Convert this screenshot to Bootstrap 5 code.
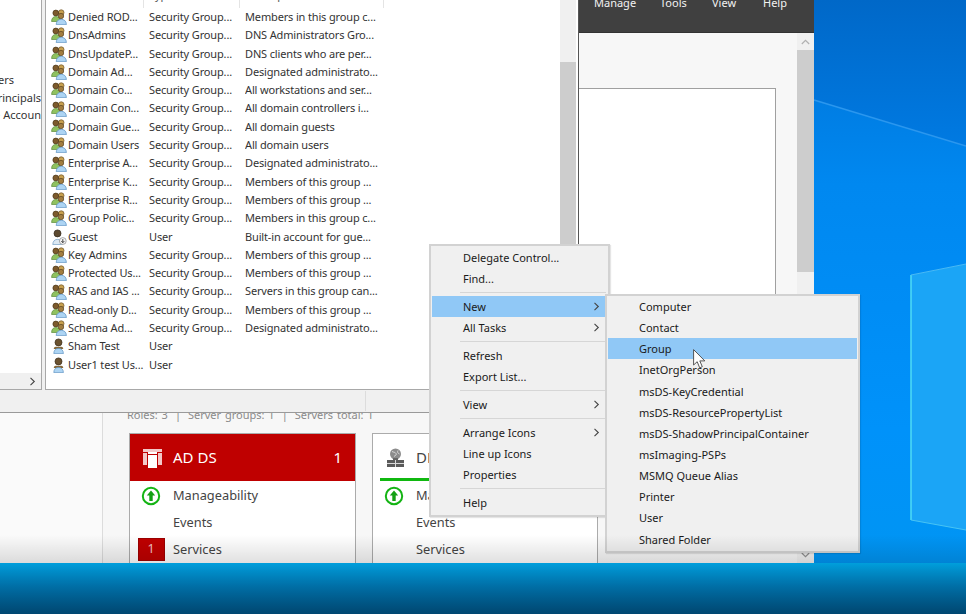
<!DOCTYPE html>
<html lang="en">
<head>
<meta charset="utf-8">
<title>Active Directory Users and Computers</title>
<link rel="stylesheet" href="https://cdn.jsdelivr.net/npm/bootstrap@5.3.0/dist/css/bootstrap.min.css">
<style>
html,body{margin:0;height:100%;overflow:hidden}
body{font-family:"Noto Sans","Open Sans",sans-serif;font-size:11px;color:#222}
.desk{width:966px;height:614px;background:linear-gradient(180deg,#0070d4 0,#0088f0 30%,#0092fa 70%,#0096f0 100%)}
.desk-art{left:0;top:0}
.sm-win{left:0;top:0;width:814px;height:563px;background:#f7f7f7}
.sm-top{height:33px;background:#404040;padding-left:594px;border-bottom:1px solid #333}
.sm-top span{color:#f2f2f2;font-size:11px;line-height:8px;position:relative;top:-1px}
.sm-top .m1{width:66px}.sm-top .m2{width:52px}.sm-top .m3{width:51px}
.sm-nav{width:103px;background:#fafafa;border-right:1px solid #dcdcdc}
.sm-main{min-width:0}
.sm-panel{margin:55px 21px 0 0;height:320px;background:#fff;border:1px solid #a0a0a0;flex:none}
.sm-roles{height:20px;margin-left:24px;color:#8a8a8a;font-size:11px;line-height:14px;word-spacing:1px;flex:none}
.sm-roles i{font-style:normal;margin:0 7px}
.sm-bar{width:17px;background:#f0f0f0}
.sm-bar-up,.sm-bar-dn{height:17px;color:#a8a8a8}
.sm-thumb{height:222px;background:#cdcdcd;flex:none}
.tile{height:140px;border:1px solid #ababab;background:#fff;border-radius:0;margin-top:5px;color:#444}
.tile-ad{width:227px;margin-left:26px}
.tile-dn{width:226px;margin-left:16px}
.tile-hd{height:47px;background:#bf0000;color:#fff;font-size:15px;padding:0 13px 0 13px;flex:none}
.tile-hd-plain{background:#fff;color:#444;position:relative}
.tile-hd-plain::after{content:"";position:absolute;left:7px;right:7px;bottom:0;height:3px;background:#10b810}
.tile-ic{width:30px;flex:none}
.tile-rows{padding-top:1px}
.tile-row{height:27px;font-size:12.8px;color:#444}
.tile-sign{width:43px;flex:none;display:flex;justify-content:center;padding-right:1px}
.tile-sign.flag span{width:27px;height:23px;background:#bf0000;border:1px solid #9c0000;color:#f3c0c0;font-size:12.5px;display:flex;align-items:center;justify-content:center;flex:none}
.ad-win{left:0;top:0;width:579px;height:413px;background:#f0f0f0;border-bottom:1px solid #9a9a9a;border-right:1px solid #555}
.ad-tree{width:42px;height:390px;background:#fff;border-right:1px solid #a8a8a8;border-bottom:1px solid #a8a8a8;flex:none;overflow:hidden}
.ad-tree-list{padding-top:71px;flex:1}
.ad-tree-list div{height:17.5px;line-height:17.5px;white-space:nowrap;display:flex;justify-content:flex-end;color:#333}
.ad-tree-list div span{flex:none}
.ad-tree-list .tr1{padding-right:27px}
.ad-tree-sb{height:16px;background:#f0f0f0;color:#555;padding-right:5px}
.ad-list{margin-left:3px;width:533px;height:390px;background:#fff;border-left:1px solid #a8a8a8;border-bottom:1px solid #a8a8a8;flex:none;overflow:hidden}
.ad-scroll{width:16px;background:#f0f0f0;position:relative}
.ad-main{flex:none;width:514px;overflow:hidden}
.ad-head{height:8px;overflow:hidden;color:#555;background:#fff}
.ad-head span{display:block;line-height:16px;margin-top:-13px;padding-left:5px;border-right:1px solid #e4e4e4;height:21px}
.ad-head .hc1{width:98px}.ad-head .hc2{width:96px}.ad-head .hc3{width:144px}
.ad-tbl{table-layout:fixed;width:514px;--bs-table-bg:transparent;--bs-table-color:#333;letter-spacing:-.15px}
.ad-tbl td{padding:0;height:18.3px;line-height:18.3px;white-space:nowrap;overflow:hidden;border:0;vertical-align:middle}
.ad-tbl .c0{width:22px;padding-left:5px}
.ad-tbl .c0 svg{display:block;width:16px;height:16px}
.ad-tbl .c1{width:81px}.ad-tbl .c2{width:96px}
.ad-scroll-thumb{height:183px;background:#cdcdcd;margin-top:62px}
.ad-status{height:22px}
.ad-status span{width:366px;border-right:1px solid #dcdcdc;height:20px;margin-top:1px}
.ctx{--bs-dropdown-bg:#f0f0f0;--bs-dropdown-border-color:#d2d2d2;--bs-dropdown-border-radius:0;--bs-dropdown-padding-y:0;--bs-dropdown-min-width:0;--bs-dropdown-font-size:11px;--bs-dropdown-link-color:#1a1a1a;--bs-dropdown-link-hover-bg:#90c8f6;--bs-dropdown-link-hover-color:#1a1a1a;--bs-dropdown-link-active-bg:#90c8f6;--bs-dropdown-link-active-color:#1a1a1a;--bs-dropdown-item-padding-x:0;--bs-dropdown-item-padding-y:0;display:block;box-shadow:1px 1px 1px rgba(0,0,0,.1);border-width:2px}
.ctx-main{left:429px;top:244px;width:181px;height:273px;padding:.5px 2px 0 1px}
.ctx-sub{left:605px;top:294px;width:255px;height:259px;padding:0 1px 0 1px}
.ctx .dropdown-item{height:21px;line-height:21px;padding-left:31px;display:flex;justify-content:space-between;align-items:center}
.ctx-main .dropdown-item{width:173px}
.ctx-sub .dropdown-item{height:21.15px}
.ctx .dropdown-item svg{width:7px;height:9px;margin-right:5px}
.ctx .dropdown-divider{margin:3px 0 3px 28px;border-top:1px solid #d6d6d6;opacity:1;height:0;box-sizing:content-box}
.ctx-main .dropdown-divider{width:146px}
.mouse{left:693px;top:349px;width:13px;height:20px;pointer-events:none;z-index:1002}
.fade-low{left:0;top:535px;width:966px;height:79px;pointer-events:none;z-index:1001;background:linear-gradient(180deg,rgba(0,0,0,0) 0,rgba(0,0,0,.12) 35%,rgba(0,0,0,.04) 36%,rgba(0,0,0,.36) 100%)}
.band{left:0;top:563px;width:966px;height:51px;background:linear-gradient(180deg,#00a4e4 0,#0088cc 45%,#006fb0 100%)}
</style>
</head>
<body>
<svg width="0" height="0" class="position-absolute" aria-hidden="true">
  <symbol id="ic-grp" viewBox="0 0 16 16">
    <circle cx="10.2" cy="3.600" r="2.800" fill="#c9a14f" stroke="#6d5228" stroke-width=".7"/>
    <circle cx="4.800" cy="4" r="2.900" fill="#7c5a2c" stroke="#4a3618" stroke-width=".7"/>
    <path d="M.6 12.500c0-3.600 2-5 4.300-5s4.300 1.400 4.300 5z" fill="#8fc15f" stroke="#5a8a3a" stroke-width=".7"/>
    <circle cx="10" cy="7" r="2.700" fill="#a27d3f" stroke="#5a4320" stroke-width=".7"/>
    <path d="M5.200 15.600c0-3.600 2.300-5.300 5-5.300s5.200 1.700 5.200 5.300z" fill="#add4f3" stroke="#5a90c2" stroke-width=".7"/>
  </symbol>
  <symbol id="ic-usr" viewBox="0 0 16 16">
    <circle cx="7.500" cy="4.400" r="3.500" fill="#6b5230" stroke="#3a2c18" stroke-width=".7"/>
    <path d="M3.300 9.200c.9-.5 7.500-.5 8.400 0l.6 1.800H2.700z" fill="#86683a"/>
    <path d="M2.800 15.600c0-3.300 1.800-5.200 4.700-5.200s4.900 1.900 4.900 5.200z" fill="#add4f3" stroke="#5a90c2" stroke-width=".7"/>
  </symbol>
  <symbol id="ic-gst" viewBox="0 0 16 16">
    <circle cx="6.500" cy="4.400" r="3.500" fill="#5d4a30" stroke="#30261a" stroke-width=".7"/>
    <path d="M1.800 15.600c0-3.300 1.800-5.200 4.700-5.200s4.900 1.900 4.900 5.200z" fill="#dce8f2" stroke="#6a98c2" stroke-width=".7"/>
    <circle cx="11.800" cy="12" r="3.400" fill="#f4f4f4" stroke="#8a8a8a" stroke-width=".7"/>
    <path d="M11.800 10.100v3.400M10.300 12.100l1.500 1.600 1.500-1.600" fill="none" stroke="#333" stroke-width=".9"/>
  </symbol>
  <symbol id="ic-chev" viewBox="0 0 7 9">
    <path d="M1.500 .8 5.300 4.500 1.500 8.200" fill="none" stroke="#444" stroke-width="1.100"/>
  </symbol>
  <symbol id="ic-up" viewBox="0 0 20 20">
    <circle cx="10" cy="10" r="8.200" fill="#fff" stroke="#14b414" stroke-width="2"/>
    <path d="M10 4.600 14.200 9.400H11.700V15H8.300V9.400H5.800z" fill="#14a014"/>
  </symbol>
</svg>

<div class="desk position-relative overflow-hidden">
  <svg class="desk-art position-absolute" width="966" height="614" viewBox="0 0 966 614" aria-hidden="true">
    <defs>
      <linearGradient id="gUp" x1="0" y1="0" x2="0" y2="1"><stop offset="0" stop-color="#0068c8"/><stop offset="1" stop-color="#007ae2"/></linearGradient>
    </defs>
    <polygon points="814,0 966,0 966,146 814,100" fill="url(#gUp)"/>
    <line x1="814" y1="100" x2="966" y2="146" stroke="#2b97ee" stroke-width="1.500"/>
    <polygon points="911,275 966,264 966,530 911,520" fill="#1ba5f6"/>
    <line x1="911" y1="275" x2="911" y2="520" stroke="#4fdcf5" stroke-width="1.500"/>
    <line x1="911" y1="520" x2="966" y2="530" stroke="#48c4f4" stroke-width="1"/>
    <line x1="911" y1="275" x2="966" y2="264" stroke="#48b8f4" stroke-width="1"/>
  </svg>

  <div class="band position-absolute"></div>

  <!-- Server Manager window -->
  <div class="sm-win position-absolute d-flex flex-column overflow-hidden">
    <div class="sm-top d-flex align-items-start flex-shrink-0">
      <span class="m1">Manage</span><span class="m2">Tools</span><span class="m3">View</span><span>Help</span>
    </div>
    <div class="d-flex flex-grow-1 overflow-hidden">
      <div class="sm-nav flex-shrink-0"></div>
      <div class="sm-main flex-grow-1 d-flex flex-column overflow-hidden">
        <div class="sm-panel"></div>
        <div class="sm-roles">Roles: 3<i>|</i>Server groups: 1<i>|</i>Servers total: 1</div>
        <div class="d-flex flex-shrink-0">
          <div class="card tile tile-ad flex-shrink-0 overflow-hidden">
            <div class="tile-hd d-flex align-items-center">
              <span class="tile-ic">
                <svg width="19" height="20" viewBox="0 0 19 20" class="d-block" aria-hidden="true">
                  <rect x="0" y="1" width="19" height="3" fill="#f3c8c8"/>
                  <rect x="0" y="5" width="4" height="12" fill="#f3c8c8"/>
                  <rect x="15" y="5" width="4" height="12" fill="#f3c8c8"/>
                  <rect x="5" y="4" width="9" height="16" fill="#fff"/>
                  <rect x="5" y="6" width="9" height="1" fill="#bf0000"/>
                </svg>
              </span>
              <span class="flex-grow-1">AD DS</span><span>1</span>
            </div>
            <div class="tile-rows">
              <div class="tile-row d-flex align-items-center"><span class="tile-sign"><svg width="20" height="20" aria-hidden="true"><use href="#ic-up"/></svg></span>Manageability</div>
              <div class="tile-row d-flex align-items-center"><span class="tile-sign"></span>Events</div>
              <div class="tile-row d-flex align-items-center"><span class="tile-sign flag"><span>1</span></span>Services</div>
            </div>
          </div>
          <div class="card tile tile-dn flex-shrink-0 overflow-hidden">
            <div class="tile-hd tile-hd-plain d-flex align-items-center">
              <span class="tile-ic">
                <svg width="19" height="20" viewBox="0 0 19 20" class="d-block" aria-hidden="true">
                  <circle cx="9.500" cy="6" r="5.500" fill="#8c8c8c"/>
                  <path d="M6 3.500c2 1 3 .5 4 2s-1 2-2 3M12 2.500c-1 1.500 0 3 1.500 3.500" fill="none" stroke="#dcdcdc" stroke-width="1"/>
                  <rect x="7" y="10" width="5" height="2" fill="#666"/>
                  <rect x="1" y="12" width="17" height="7" fill="#5a5a5a"/>
                  <path d="M1 15.500h17M9.500 12v7" stroke="#d8d8d8" stroke-width="1"/>
                </svg>
              </span>
              <span class="flex-grow-1">DNS</span>
            </div>
            <div class="tile-rows">
              <div class="tile-row d-flex align-items-center"><span class="tile-sign"><svg width="20" height="20" aria-hidden="true"><use href="#ic-up"/></svg></span>Manageability</div>
              <div class="tile-row d-flex align-items-center"><span class="tile-sign"></span>Events</div>
              <div class="tile-row d-flex align-items-center"><span class="tile-sign"></span>Services</div>
            </div>
          </div>
        </div>
      </div>
      <div class="sm-bar flex-shrink-0 d-flex flex-column">
        <div class="sm-bar-up d-flex align-items-center justify-content-center"><svg width="9" height="6" viewBox="0 0 9 6" aria-hidden="true"><path d="M.8 5 4.500 1.300 8.200 5" fill="none" stroke="#b0b0b0" stroke-width="1.200"/></svg></div>
        <div class="sm-thumb"></div>
        <div class="flex-grow-1"></div>
        <div class="sm-bar-dn d-flex align-items-center justify-content-center"><svg width="9" height="6" viewBox="0 0 9 6" aria-hidden="true"><path d="M.8 1 4.500 4.700 8.200 1" fill="none" stroke="#909090" stroke-width="1.200"/></svg></div>
      </div>
    </div>
  </div>

  <!-- Active Directory Users and Computers window -->
  <div class="ad-win position-absolute">
    <div class="d-flex">
      <div class="ad-tree d-flex flex-column">
        <div class="ad-tree-list">
          <div class="tr1"><span>Users</span></div>
          <div><span>Foreign Security Principals</span></div>
          <div><span>Managed Service Accoun</span></div>
        </div>
        <div class="ad-tree-sb d-flex align-items-center justify-content-end"><svg width="7" height="9" aria-hidden="true"><use href="#ic-chev"/></svg></div>
      </div>
      <div class="ad-list d-flex">
        <div class="ad-main">
          <div class="ad-head d-flex"><span class="hc1">Name</span><span class="hc2">Type</span><span class="hc3">Description</span></div>
          <table class="table table-borderless mb-0 ad-tbl">
            <colgroup><col class="c0"><col class="c1"><col class="c2"><col></colgroup>
            <tbody>
              <tr><td class="c0"><svg aria-hidden="true"><use href="#ic-grp"/></svg></td><td>Denied ROD...</td><td>Security Group...</td><td>Members in this group c...</td></tr>
              <tr><td class="c0"><svg aria-hidden="true"><use href="#ic-grp"/></svg></td><td>DnsAdmins</td><td>Security Group...</td><td>DNS Administrators Gro...</td></tr>
              <tr><td class="c0"><svg aria-hidden="true"><use href="#ic-grp"/></svg></td><td>DnsUpdateP...</td><td>Security Group...</td><td>DNS clients who are per...</td></tr>
              <tr><td class="c0"><svg aria-hidden="true"><use href="#ic-grp"/></svg></td><td>Domain Ad...</td><td>Security Group...</td><td>Designated administrato...</td></tr>
              <tr><td class="c0"><svg aria-hidden="true"><use href="#ic-grp"/></svg></td><td>Domain Co...</td><td>Security Group...</td><td>All workstations and ser...</td></tr>
              <tr><td class="c0"><svg aria-hidden="true"><use href="#ic-grp"/></svg></td><td>Domain Con...</td><td>Security Group...</td><td>All domain controllers i...</td></tr>
              <tr><td class="c0"><svg aria-hidden="true"><use href="#ic-grp"/></svg></td><td>Domain Gue...</td><td>Security Group...</td><td>All domain guests</td></tr>
              <tr><td class="c0"><svg aria-hidden="true"><use href="#ic-grp"/></svg></td><td>Domain Users</td><td>Security Group...</td><td>All domain users</td></tr>
              <tr><td class="c0"><svg aria-hidden="true"><use href="#ic-grp"/></svg></td><td>Enterprise A...</td><td>Security Group...</td><td>Designated administrato...</td></tr>
              <tr><td class="c0"><svg aria-hidden="true"><use href="#ic-grp"/></svg></td><td>Enterprise K...</td><td>Security Group...</td><td>Members of this group ...</td></tr>
              <tr><td class="c0"><svg aria-hidden="true"><use href="#ic-grp"/></svg></td><td>Enterprise R...</td><td>Security Group...</td><td>Members of this group ...</td></tr>
              <tr><td class="c0"><svg aria-hidden="true"><use href="#ic-grp"/></svg></td><td>Group Polic...</td><td>Security Group...</td><td>Members in this group c...</td></tr>
              <tr><td class="c0"><svg aria-hidden="true"><use href="#ic-gst"/></svg></td><td>Guest</td><td>User</td><td>Built-in account for gue...</td></tr>
              <tr><td class="c0"><svg aria-hidden="true"><use href="#ic-grp"/></svg></td><td>Key Admins</td><td>Security Group...</td><td>Members of this group ...</td></tr>
              <tr><td class="c0"><svg aria-hidden="true"><use href="#ic-grp"/></svg></td><td>Protected Us...</td><td>Security Group...</td><td>Members of this group ...</td></tr>
              <tr><td class="c0"><svg aria-hidden="true"><use href="#ic-grp"/></svg></td><td>RAS and IAS ...</td><td>Security Group...</td><td>Servers in this group can...</td></tr>
              <tr><td class="c0"><svg aria-hidden="true"><use href="#ic-grp"/></svg></td><td>Read-only D...</td><td>Security Group...</td><td>Members of this group ...</td></tr>
              <tr><td class="c0"><svg aria-hidden="true"><use href="#ic-grp"/></svg></td><td>Schema Ad...</td><td>Security Group...</td><td>Designated administrato...</td></tr>
              <tr><td class="c0"><svg aria-hidden="true"><use href="#ic-usr"/></svg></td><td>Sham Test</td><td>User</td><td></td></tr>
              <tr><td class="c0"><svg aria-hidden="true"><use href="#ic-usr"/></svg></td><td>User1 test Us...</td><td>User</td><td></td></tr>
            </tbody>
          </table>
        </div>
        <div class="ad-scroll flex-shrink-0"><div class="ad-scroll-thumb"></div></div>
      </div>
    </div>
    <div class="ad-status d-flex"><span></span></div>
  </div>

  <!-- Context menu -->
  <div class="dropdown-menu show ctx ctx-main position-absolute">
    <a class="dropdown-item" href="#">Delegate Control...</a>
    <a class="dropdown-item" href="#">Find...</a>
    <hr class="dropdown-divider">
    <a class="dropdown-item active" href="#">New<svg aria-hidden="true"><use href="#ic-chev"/></svg></a>
    <a class="dropdown-item" href="#">All Tasks<svg aria-hidden="true"><use href="#ic-chev"/></svg></a>
    <hr class="dropdown-divider">
    <a class="dropdown-item" href="#">Refresh</a>
    <a class="dropdown-item" href="#">Export List...</a>
    <hr class="dropdown-divider">
    <a class="dropdown-item" href="#">View<svg aria-hidden="true"><use href="#ic-chev"/></svg></a>
    <hr class="dropdown-divider">
    <a class="dropdown-item" href="#">Arrange Icons<svg aria-hidden="true"><use href="#ic-chev"/></svg></a>
    <a class="dropdown-item" href="#">Line up Icons</a>
    <a class="dropdown-item" href="#">Properties</a>
    <hr class="dropdown-divider">
    <a class="dropdown-item" href="#">Help</a>
  </div>

  <div class="dropdown-menu show ctx ctx-sub position-absolute">
    <a class="dropdown-item" href="#">Computer</a>
    <a class="dropdown-item" href="#">Contact</a>
    <a class="dropdown-item active" href="#">Group</a>
    <a class="dropdown-item" href="#">InetOrgPerson</a>
    <a class="dropdown-item" href="#">msDS-KeyCredential</a>
    <a class="dropdown-item" href="#">msDS-ResourcePropertyList</a>
    <a class="dropdown-item" href="#">msDS-ShadowPrincipalContainer</a>
    <a class="dropdown-item" href="#">msImaging-PSPs</a>
    <a class="dropdown-item" href="#">MSMQ Queue Alias</a>
    <a class="dropdown-item" href="#">Printer</a>
    <a class="dropdown-item" href="#">User</a>
    <a class="dropdown-item" href="#">Shared Folder</a>
  </div>

  <svg class="mouse position-absolute" viewBox="0 0 13 20" aria-hidden="true">
    <path d="M.6.6V16L4.200 12.700 6.700 18.800 9.300 17.700 6.800 11.900H11.800z" fill="#fff" stroke="#444" stroke-width=".9"/>
  </svg>

  <div class="fade-low position-absolute"></div>
</div>
<script src="https://cdn.jsdelivr.net/npm/bootstrap@5.3.0/dist/js/bootstrap.bundle.min.js"></script>
</body>
</html>
